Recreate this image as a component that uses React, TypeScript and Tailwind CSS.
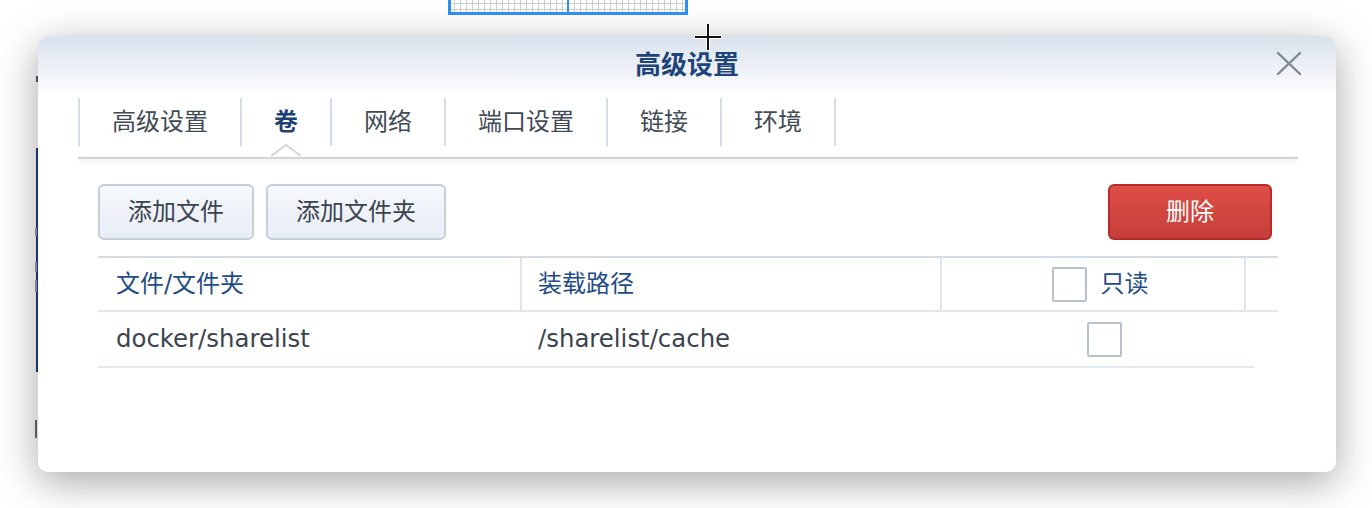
import React from "react";

function GridWindow() {
  const vlines = [];
  for (let x = 6; x < 240; x += 6) vlines.push(x);
  return (
    <svg width="240" height="15" viewBox="0 0 240 15" className="absolute left-[448px] top-0">
      <rect x="0" y="0" width="240" height="15" fill="#ffffff" />
      {vlines.map((x) => (
        <line key={x} x1={x + 0.5} y1="0" x2={x + 0.5} y2="13" stroke="#cfcfcf" strokeWidth="1" />
      ))}
      <line x1="0" y1="3.5" x2="240" y2="3.5" stroke="#cfcfcf" strokeWidth="1" />
      <line x1="0" y1="9.5" x2="240" y2="9.5" stroke="#cfcfcf" strokeWidth="1" />
      <rect x="0" y="0" width="3" height="15" fill="#2f90f4" />
      <rect x="237" y="0" width="3" height="15" fill="#2f90f4" />
      <rect x="0" y="12" width="240" height="3" fill="#2f90f4" />
      <rect x="119" y="0" width="2" height="15" fill="#2f90f4" />
    </svg>
  );
}

function Checkbox() {
  return <div className="w-[35px] h-[35px] border-2 border-[#b8c2ce] rounded-[2px] bg-white shrink-0" />;
}

export default function App() {
  const tabs = ["高级设置", "卷", "网络", "端口设置", "链接", "环境"];
  return (
    <div className="relative w-[1372px] h-[508px] bg-white overflow-hidden pt-[36px] pl-[38px] font-['DejaVu_Sans','Noto_Sans_CJK_SC',sans-serif] text-[24px]">
      {/* background desktop content */}
      <GridWindow />
      <div className="absolute left-[36px] top-[76px] w-[2px] h-[6px] bg-[#555b63]" />
      <div className="absolute left-[36px] top-[148px] w-[2px] h-[224px] bg-[#1d3e79]" />
      <div className="absolute left-[35px] top-[228px] w-[2px] h-[8px] bg-[#9aa0a8]" />
      <div className="absolute left-[35px] top-[262px] w-[2px] h-[10px] bg-[#9aa0a8]" />
      <div className="absolute left-[35px] top-[280px] w-[2px] h-[12px] bg-[#9aa0a8]" />
      <div className="absolute left-[35px] top-[420px] w-[2px] h-[18px] bg-[#6a7078]" />

      {/* dialog */}
      <div className="relative z-10 w-[1298px] h-[436px] rounded-[10px] bg-white shadow-[0_10px_40px_rgba(0,0,0,0.35)] flex flex-col">
        {/* header */}
        <div className="relative h-[62px] rounded-t-[10px] bg-gradient-to-b from-[#dae2ed] to-white flex justify-center pt-[14px]">
          <div className="text-[26px] leading-[30px] font-bold text-[#1f4479]">高级设置</div>
          <svg width="26" height="26" viewBox="0 0 26 26" className="absolute right-[34px] top-[15px]">
            <path d="M2 2 L24 23 M24 2 L2 23" stroke="#80868e" strokeWidth="2.4" strokeLinecap="round" fill="none" />
          </svg>
        </div>

        {/* tabs */}
        <div className="relative pl-[40px] pr-[38px]">
          <div className="flex h-[48px]">
            <div className="flex border-l-2 border-[#d3dde8]">
              {tabs.map((t, i) => (
                <div
                  key={t}
                  className={
                    i === 1
                      ? "flex items-center px-8 border-r-2 border-[#d3dde8] text-[#1f4275] font-bold"
                      : "flex items-center px-8 border-r-2 border-[#d3dde8] text-[#414b55]"
                  }
                >
                  {t}
                </div>
              ))}
            </div>
          </div>
          <div className="mt-[11px] h-[2px] bg-[#d2d5d9] shadow-[0_2px_4px_rgba(0,0,0,0.10)]" />
          <svg width="30" height="14" viewBox="0 0 30 14" className="absolute left-[233px] top-[46px]">
            <path d="M0 12 L15 1 L30 12 Z" fill="#ffffff" />
            <path d="M0 12 L15 1 L30 12" stroke="#d2d5d9" strokeWidth="2" fill="none" />
          </svg>
        </div>

        {/* content */}
        <div className="pl-[60px] pr-[58px] pt-[25px]">
          <div className="flex justify-between pr-[6px]">
            <div className="flex gap-[12px]">
              <button className="w-[156px] h-[56px] rounded-[6px] border-2 border-[#c5cfdb] bg-gradient-to-b from-[#f5f8fc] to-[#e8edf5] text-[#3b444e]">
                添加文件
              </button>
              <button className="w-[180px] h-[56px] rounded-[6px] border-2 border-[#c5cfdb] bg-gradient-to-b from-[#f5f8fc] to-[#e8edf5] text-[#3b444e]">
                添加文件夹
              </button>
            </div>
            <button className="w-[164px] h-[56px] rounded-[6px] border-2 border-[#b9292b] bg-gradient-to-b from-[#de4e47] to-[#c63e39] text-white">
              删除
            </button>
          </div>

          {/* table */}
          <div className="mt-[16px] border-t-2 border-[#d4dde8]">
            <div className="flex h-[54px] border-b-2 border-[#e1e7ef] text-[#234c86]">
              <div className="w-[424px] border-r-2 border-[#dfe6ef] pl-[18px] flex items-center">文件/文件夹</div>
              <div className="w-[420px] border-r-2 border-[#dfe6ef] pl-[16px] flex items-center">装载路径</div>
              <div className="w-[304px] border-r-2 border-[#dfe6ef] pl-[14px] flex items-center justify-center gap-[14px]">
                <Checkbox />
                <span>只读</span>
              </div>
              <div className="flex-1" />
            </div>
            <div className="flex w-[1156px] h-[56px] border-b-2 border-[#e3e8ef] text-[#3b444e]">
              <div className="w-[424px] pl-[18px] flex items-center text-[24.4px]">docker/sharelist</div>
              <div className="w-[420px] pl-[16px] flex items-center text-[24.4px]">/sharelist/cache</div>
              <div className="flex-1 pl-[12px] flex items-center justify-center">
                <Checkbox />
              </div>
            </div>
          </div>
        </div>
      </div>

      {/* cursor */}
      <svg width="30" height="30" viewBox="0 0 30 30" className="absolute z-20 left-[693px] top-[22px]">
        <path d="M1 15 H29 M15 1 V29" stroke="#ffffff" strokeWidth="4" />
        <path d="M2 15 H28 M15 2 V28" stroke="#111111" strokeWidth="2" />
      </svg>
    </div>
  );
}
